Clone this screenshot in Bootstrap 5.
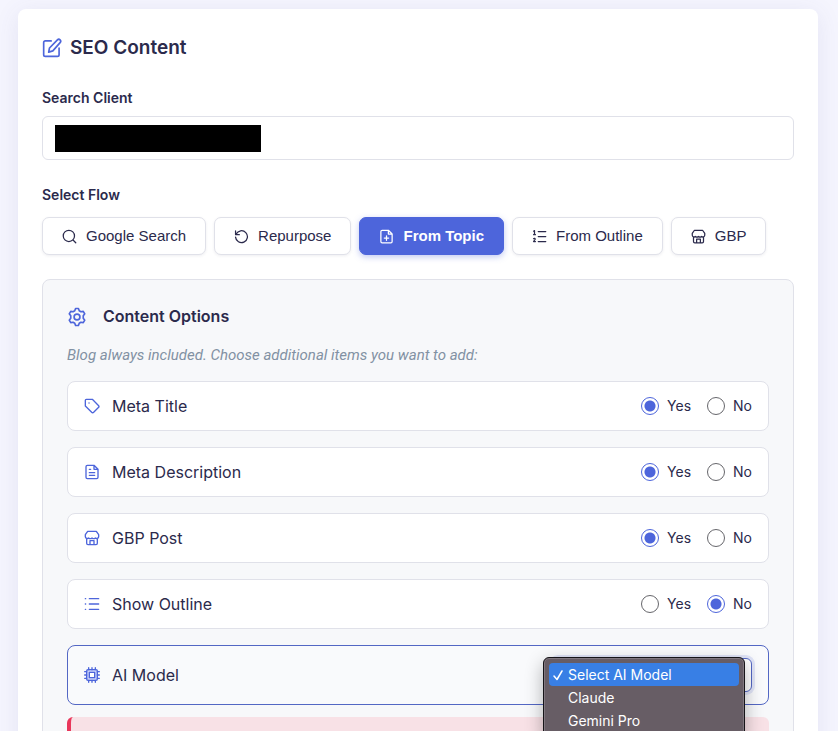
<!DOCTYPE html>
<html lang="en">
<head>
<meta charset="utf-8">
<meta name="viewport" content="width=device-width, initial-scale=1">
<title>SEO Content</title>
<link href="https://cdn.jsdelivr.net/npm/bootstrap@5.3.0/dist/css/bootstrap.min.css" rel="stylesheet">
<style>
:root{--ink:#2b2a4c;--brand:#4d65db;--line:#e0e1e9}
body{font-family:Inter,"Liberation Sans",sans-serif;color:var(--ink);background:#f5f5fe;font-size:14px;line-height:20px}
svg{display:block;flex:none;fill:none;stroke:currentColor;stroke-width:2;stroke-linecap:round;stroke-linejoin:round}
main{padding:9px 20px 0 18px}
.sheet{background:#fff;border-radius:8px;padding:24px;box-shadow:0 4px 24px rgba(77,80,150,.1)}
.brand-ink{color:var(--brand)}
.page-title{font-size:19px;line-height:30px;font-weight:600}
.field-label{font-weight:600;display:block;margin-top:25px}
.client-box{border:1px solid var(--line);border-radius:6px;height:44px;padding:0 12px}
.client-box input{outline:0;min-width:0}
.redacted{width:206px;height:27px;background:#000}
.flow-btn{--bs-btn-color:var(--ink);--bs-btn-bg:#fff;--bs-btn-border-color:var(--line);--bs-btn-active-color:#fff;--bs-btn-active-bg:var(--brand);--bs-btn-active-border-color:var(--brand);--bs-btn-border-radius:7px;--bs-btn-padding-x:19px;--bs-btn-padding-y:8px;--bs-btn-font-family:"Liberation Sans",Arial,sans-serif;--bs-btn-font-size:15px;--bs-btn-line-height:20px;white-space:nowrap;box-shadow:0 1px 3px rgba(43,42,76,.08)}
.flow-btn.active{font-weight:700;box-shadow:0 2px 6px rgba(77,101,219,.35)}
.flow-btn{gap:9px}
.panel{background:#f7f8fa;border:1px solid var(--line);border-radius:8px;padding:24px}
.panel-title{font-size:16px;line-height:25px;font-weight:600}
.hint{color:#8291a3;font-family:Roboto,Inter,sans-serif;font-size:15px;font-style:italic;line-height:20px}
.option{background:#fff;border:1px solid var(--line);border-radius:8px;min-height:50px;padding:0 16px}
.option-name{font-size:16px;line-height:24px}
.pick{width:18px;height:18px;margin:0;appearance:none;border:1px solid #66666b;border-radius:50%;background:#fff;flex:none}
.pick:checked{border-color:var(--brand);background:radial-gradient(circle,var(--brand) 5px,transparent 6px)}
.option.current{background:#f9fafc;border-color:#5367c4;min-height:60px}
.model{width:200px}
.model .form-select{height:34px;font-size:14px;padding:4px 32px 4px 12px;border-color:#5367c4;border-radius:6px;box-shadow:0 0 0 3px rgba(77,101,219,.14);background-image:none}
.model-menu{left:-9px;right:7px;top:-1px;background:#675d65;border:1px solid #161418;box-shadow:inset 0 0 0 1px #817880,0 6px 18px rgba(0,0,0,.3);border-radius:6px;padding:5px;font-size:14px;line-height:23px;color:#fff;z-index:2;list-style:none}
.model-menu li{border-radius:4px;padding-left:19px}
.model-menu .chosen{background:#387fe5}
.model-menu svg{left:9px;top:11px}
.warning-box{background:#f8e1e6;border-left:4px solid #e9375b;border-radius:6px;min-height:60px;margin-top:12px}
</style>
<script src="https://cdn.jsdelivr.net/npm/bootstrap@5.3.0/dist/js/bootstrap.bundle.min.js"></script>
</head>
<body class="vh-100 overflow-hidden">
<svg class="d-none">
<symbol id="shop" viewBox="0 0 24 24"><path d="M5.500 2h13L22 7v3a3 3 0 0 1-5 2 3.500 3.500 0 0 1-5 0 3.500 3.500 0 0 1-5 0 3 3 0 0 1-5-2V7zM4 13v7a2 2 0 0 0 2 2h12a2 2 0 0 0 2-2v-7M9 22v-6h6v6"/></symbol>
</svg>
<main>
<div class="sheet">
  <h1 class="page-title d-flex align-items-center gap-2 mb-0">
    <svg class="brand-ink" width="20" height="20" viewBox="0 0 24 24"><path d="M11 3.500H4a2 2 0 0 0-2 2V20a2 2 0 0 0 2 2h14.500a2 2 0 0 0 2-2v-8M18.500 2.300a2 2 0 0 1 3.200 3.200L13 15.500 8 17l1-5z"/></svg>
    SEO Content
  </h1>
  <label class="field-label mb-2" for="client">Search Client</label>
  <div class="client-box d-flex align-items-center">
    <span class="redacted"></span>
    <input class="border-0 bg-transparent flex-grow-1" id="client" type="text">
  </div>
  <div class="field-label" id="flow-label">Select Flow</div>
  <div class="d-flex flex-wrap gap-2 mt-2 pt-1" role="group" aria-labelledby="flow-label">
    <button type="button" class="btn flow-btn d-flex align-items-center"><svg width="15" height="15" viewBox="0 0 24 24"><circle cx="11" cy="11" r="9"/><path d="m18 18 4 4"/></svg>Google Search</button>
    <button type="button" class="btn flow-btn d-flex align-items-center"><svg width="15" height="15" viewBox="0 0 24 24"><path d="M2.500 3v6h6M3.500 8A9.500 9.500 0 1 1 2.500 13"/></svg>Repurpose</button>
    <button type="button" class="btn flow-btn active d-flex align-items-center" aria-pressed="true"><svg width="15" height="15" viewBox="0 0 24 24"><path d="M15 2H5a2 2 0 0 0-2 2v16a2 2 0 0 0 2 2h14a2 2 0 0 0 2-2V8zM15 2v6h6M12 11v7M8.500 14.500h7"/></svg>From Topic</button>
    <button type="button" class="btn flow-btn d-flex align-items-center"><svg width="15" height="15" viewBox="0 0 24 24"><path d="M10 4h12M10 12h12M10 20h12M2.500 3.500 4 2.500V9M2.500 9h3M2.500 15.500c1-1 3-.5 2.500 1L2.500 20h3"/></svg>From Outline</button>
    <button type="button" class="btn flow-btn d-flex align-items-center"><svg width="15" height="15"><use href="#shop"/></svg>GBP</button>
  </div>
  <section class="panel mt-4">
    <h2 class="panel-title d-flex align-items-center gap-3 mb-3">
      <svg class="brand-ink" width="20" height="20" viewBox="0 0 24 24"><path d="M9.300 4.500 10.300 1.800h3.400l1 2.700 2 1.200 2.800-.5 1.800 3-1.800 2.300v3l1.800 2.300-1.800 3-2.800-.5-2 1.200-1 2.700h-3.400l-1-2.700-2-1.200-2.800.5-1.800-3 1.800-2.300v-3L2.700 8.200l1.800-3 2.800.5z"/><circle cx="12" cy="12" r="3.500"/></svg>
      Content Options
    </h2>
    <p class="hint mb-3">Blog always included. Choose additional items you want to add:</p>
    <div class="d-flex flex-column gap-3">
      <div class="option d-flex align-items-center" role="radiogroup" aria-label="Meta Title">
        <svg class="brand-ink me-2" width="16" height="16" viewBox="0 0 24 24"><path d="M2 3.500A1.500 1.500 0 0 1 3.500 2h9L22 11.500a2 2 0 0 1 0 2.500l-7.500 7.500a2 2 0 0 1-3 0L2 12zM7.500 7.500h.1"/></svg>
        <span class="option-name ms-1 me-auto">Meta Title</span>
        <label class="d-flex align-items-center gap-2 me-3"><input class="pick" type="radio" name="title" checked>Yes</label>
        <label class="d-flex align-items-center gap-2"><input class="pick" type="radio" name="title">No</label>
      </div>
      <div class="option d-flex align-items-center" role="radiogroup" aria-label="Meta Description">
        <svg class="brand-ink me-2" width="16" height="16" viewBox="0 0 24 24"><path d="M15 2H5a2 2 0 0 0-2 2v16a2 2 0 0 0 2 2h14a2 2 0 0 0 2-2V8zM15 2v6h6M8 8h2M8 13h8M8 17h8"/></svg>
        <span class="option-name ms-1 me-auto">Meta Description</span>
        <label class="d-flex align-items-center gap-2 me-3"><input class="pick" type="radio" name="description" checked>Yes</label>
        <label class="d-flex align-items-center gap-2"><input class="pick" type="radio" name="description">No</label>
      </div>
      <div class="option d-flex align-items-center" role="radiogroup" aria-label="GBP Post">
        <svg class="brand-ink me-2" width="16" height="16"><use href="#shop"/></svg>
        <span class="option-name ms-1 me-auto">GBP Post</span>
        <label class="d-flex align-items-center gap-2 me-3"><input class="pick" type="radio" name="gbp" checked>Yes</label>
        <label class="d-flex align-items-center gap-2"><input class="pick" type="radio" name="gbp">No</label>
      </div>
      <div class="option d-flex align-items-center" role="radiogroup" aria-label="Show Outline">
        <svg class="brand-ink me-2" width="16" height="16" viewBox="0 0 24 24"><path d="M8 4h14M8 12h14M8 20h14M2 4h.500M2 12h.500M2 20h.500"/></svg>
        <span class="option-name ms-1 me-auto">Show Outline</span>
        <label class="d-flex align-items-center gap-2 me-3"><input class="pick" type="radio" name="outline">Yes</label>
        <label class="d-flex align-items-center gap-2"><input class="pick" type="radio" name="outline" checked>No</label>
      </div>
      <div class="option current d-flex align-items-center">
        <svg class="brand-ink me-2" width="16" height="16" viewBox="0 0 24 24"><rect x="4" y="4" width="16" height="16" rx="2" fill="#cdd5fa"/><rect x="8" y="8" width="8" height="8" fill="#fff"/><path d="M7 1v3M12 1v3M17 1v3M7 20v3M12 20v3M17 20v3M1 7h3M1 12h3M1 17h3M20 7h3M20 12h3M20 17h3"/></svg>
        <label class="option-name ms-1 me-auto" for="model">AI Model</label>
        <div class="model position-relative">
          <select class="form-select" id="model"><option>Select AI Model</option><option>Claude</option><option>Gemini Pro</option></select>
          <ul class="model-menu position-absolute mb-0">
            <li class="chosen"><svg class="position-absolute" width="10" height="12" viewBox="0 0 10 12"><path d="m1 7 3 3.500L9 2" stroke-width="1.500"/></svg>Select AI Model</li>
            <li>Claude</li>
            <li>Gemini Pro</li>
          </ul>
        </div>
      </div>
    </div>
    <div class="warning-box"></div>
  </section>
</div>
</main>
</body>
</html>
